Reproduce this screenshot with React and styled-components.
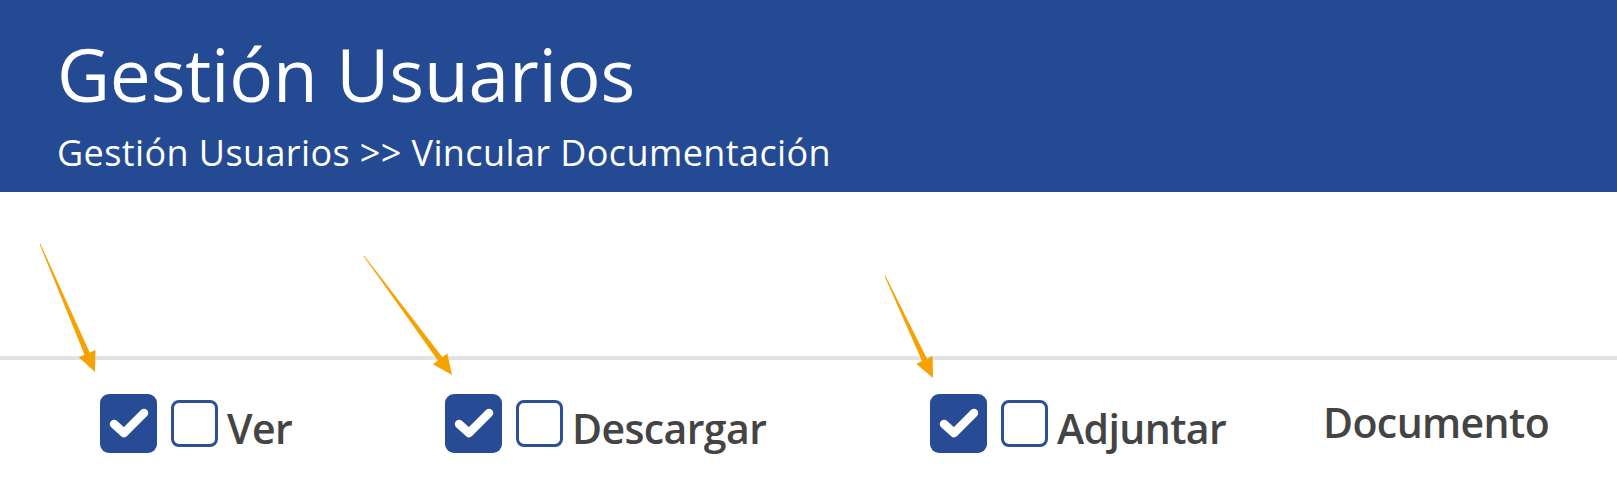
import styled, { createGlobalStyle } from 'styled-components'

const Global = createGlobalStyle`
  body {
    margin: 0;
    background: #fff;
    font-family: "Open Sans", "Liberation Sans", sans-serif;
  }
`

const Page = styled.div`
  position: relative;
  width: 1617px;
  height: 484px;
  overflow: hidden;
`

const Header = styled.header`
  background: #244a93;
  height: 192px;
  box-sizing: border-box;
  padding: 33px 0 0 57px;
  color: #fff;
`

const Title = styled.h1`
  margin: 0;
  font-family: "Open Sans", sans-serif;
  font-weight: 400;
  font-size: 73px;
  line-height: 82px;
  letter-spacing: -0.2px;
`

const Crumbs = styled.div`
  margin-top: 17px;
  font-family: "Open Sans", sans-serif;
  font-size: 36px;
  line-height: 42px;
  letter-spacing: 0.4px;
`

const Table = styled.div`
  margin-top: 164px;
  border-top: 4px solid #e2e2e2;
`

const HeadRow = styled.div`
  display: grid;
  grid-template-columns: 345px 485px 393px 1fr;
  padding: 30px 0 0 100px;
  align-items: center;
`

const Cell = styled.div`
  display: flex;
  align-items: center;
`

const Checked = styled.span`
  width: 57px;
  height: 59px;
  border-radius: 9px;
  background: #274b95;
  display: flex;
  align-items: center;
  justify-content: center;
  margin-right: 14px;
`

const Unchecked = styled.span`
  width: 41px;
  height: 41px;
  border: 3px solid #2d4f96;
  border-radius: 8px;
  background: #fff;
  margin-right: 9px;
`

const Label = styled.span`
  font-family: "Open Sans", sans-serif;
  font-weight: 600;
  font-size: 41px;
  color: #444;
  letter-spacing: -0.6px;
  padding-top: ${({ $lift }) => ($lift ? '0' : '10px')};
  margin-top: ${({ $lift }) => ($lift ? '-2px' : '0')};
`

const Overlay = styled.svg`
  position: absolute;
  left: 0;
  top: 0;
  pointer-events: none;
`

function Arrow({ x1, y1, x2, y2 }) {
  const dx = x2 - x1
  const dy = y2 - y1
  const len = Math.hypot(dx, dy)
  const ux = dx / len
  const uy = dy / len
  const nx = -uy
  const ny = ux
  const head = 20
  const bx = x2 - ux * head
  const by = y2 - uy * head
  const p = (x, y) => `${x.toFixed(1)},${y.toFixed(1)}`
  const pts = [
    p(x1 + nx * 0.4, y1 + ny * 0.4),
    p(bx + nx * 2.8, by + ny * 2.8),
    p(bx + nx * 9, by + ny * 9),
    p(x2, y2),
    p(bx - nx * 9, by - ny * 9),
    p(bx - nx * 2.8, by - ny * 2.8),
    p(x1 - nx * 0.4, y1 - ny * 0.4),
  ]
  return <polygon points={pts.join(' ')} fill="#f6a200" />
}

function Check() {
  return (
    <Checked>
      <svg width="42" height="34" viewBox="0 0 42 34">
        <path d="M6 18 L16 27 L36 7" fill="none" stroke="#fff" strokeWidth="8.5" strokeLinecap="round" strokeLinejoin="round" />
      </svg>
    </Checked>
  )
}

function Permission({ label }) {
  return (
    <Cell>
      <Check />
      <Unchecked />
      <Label>{label}</Label>
    </Cell>
  )
}

export default function App() {
  return (
    <Page>
      <Global />
      <Header>
        <Title>Gestión Usuarios</Title>
        <Crumbs>Gestión Usuarios &gt;&gt; Vincular Documentación</Crumbs>
      </Header>
      <Table>
        <HeadRow>
          <Permission label="Ver" />
          <Permission label="Descargar" />
          <Permission label="Adjuntar" />
          <Cell>
            <Label $lift>Documento</Label>
          </Cell>
        </HeadRow>
      </Table>
      <Overlay width="1617" height="484">
        <Arrow x1={40} y1={244} x2={95} y2={372} />
        <Arrow x1={364} y1={256} x2={452} y2={375} />
        <Arrow x1={885} y1={276} x2={933} y2={378} />
      </Overlay>
    </Page>
  )
}
